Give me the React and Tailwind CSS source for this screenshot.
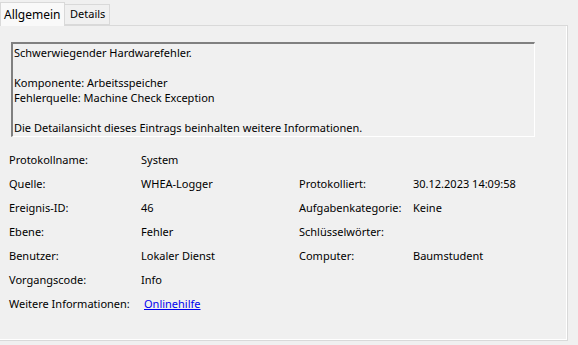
import React from 'react';

const rows = [
  ['Protokollname:', 'System', '', ''],
  ['Quelle:', 'WHEA-Logger', 'Protokolliert:', '30.12.2023 14:09:58'],
  ['Ereignis-ID:', '46', 'Aufgabenkategorie:', 'Keine'],
  ['Ebene:', 'Fehler', 'Schlüsselwörter:', ''],
  ['Benutzer:', 'Lokaler Dienst', 'Computer:', 'Baumstudent'],
  ['Vorgangscode:', 'Info', '', ''],
];

const App = () => {
  return (
    <div
      className="w-[578px] h-[345px] bg-[#f0f0f0] text-[11px] text-black overflow-hidden"
      style={{ fontFamily: '"Noto Sans", sans-serif' }}
    >
      {/* tabs */}
      <div className="flex items-end h-[26px] relative z-10">
        <div className="w-[65px] h-[24px] pl-[3px] flex items-center bg-[#f9f9f9] border border-b-0 border-[#d9d9d9] text-[12px]">
          Allgemein
        </div>
        <div className="w-[45px] h-[21px] pl-[5px] mb-[1px] flex items-center bg-[#f0f0f0] border border-l-0 border-[#d9d9d9]">
          Details
        </div>
      </div>

      {/* panel */}
      <div className="-mt-px w-[568px] h-[316px] border border-l-0 border-[#d9d9d9] shadow-[inset_-1px_-1px_0_#ffffff]">
        <div className="ml-[11px] mt-[16px] w-[524px] h-[95px] border-t-2 border-l-2 border-t-[#808080] border-l-[#808080] border-r border-b border-r-[#ffffff] border-b-[#ffffff] px-[1px] pt-[1px] leading-[15px]">
          <p>Schwerwiegender Hardwarefehler.</p>
          <p>&nbsp;</p>
          <p>Komponente: Arbeitsspeicher</p>
          <p>Fehlerquelle: Machine Check Exception</p>
          <p>&nbsp;</p>
          <p>Die Detailansicht dieses Eintrags beinhalten weitere Informationen.</p>
        </div>

        <div className="mt-[11px] ml-[9px] grid grid-cols-[132px_158px_114px_1fr] auto-rows-[24px] items-center">
          {rows.map((r, i) => (
            <React.Fragment key={i}>
              <span>{r[0]}</span>
              <span>{r[1]}</span>
              <span>{r[2]}</span>
              <span>{r[3]}</span>
            </React.Fragment>
          ))}
          <span>Weitere Informationen:</span>
          <span className="pl-[3px]">
            <a href="#" className="text-[#0000ee] underline">Onlinehilfe</a>
          </span>
        </div>
      </div>
    </div>
  );
};

export default App;
